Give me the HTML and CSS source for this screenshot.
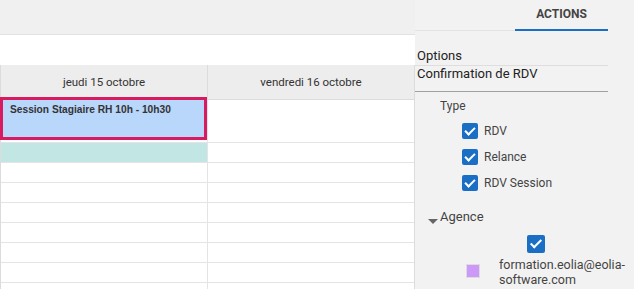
FILE: index.html
```html
<!DOCTYPE html>
<html>
<head>
    <title>Agenda</title>
    <link rel="stylesheet" href="styles.css">
</head>
<body>
    <div class="page">
        <div class="calendar">
            <div class="toolbar"></div>
            <div class="bar"></div>
            <div class="grid">
                <div class="row head">
                    <div class="cell">jeudi 15 octobre</div>
                    <div class="cell">vendredi 16 octobre</div>
                </div>
                <div class="row first">
                    <div class="cell"></div>
                    <div class="cell"></div>
                </div>
                <div class="row">
                    <div class="cell teal"></div>
                    <div class="cell"></div>
                </div>
                <div class="row"><div class="cell"></div><div class="cell"></div></div>
                <div class="row"><div class="cell"></div><div class="cell"></div></div>
                <div class="row"><div class="cell"></div><div class="cell"></div></div>
                <div class="row"><div class="cell"></div><div class="cell"></div></div>
                <div class="row"><div class="cell"></div><div class="cell"></div></div>
                <div class="row"><div class="cell"></div><div class="cell"></div></div>
                <div class="row"><div class="cell"></div><div class="cell"></div></div>

                <div class="event">Session Stagiaire RH 10h - 10h30</div>
            </div>
        </div>

        <div class="sidebar">
            <div class="tabs">
                <div class="tab active">ACTIONS</div>
            </div>
            <div class="menu-item">Options</div>
            <div class="menu-item last">Confirmation de RDV</div>

            <div class="group">
                <div class="group-title">Type</div>
                <label class="check"><span class="box"></span>RDV</label>
                <label class="check"><span class="box"></span>Relance</label>
                <label class="check"><span class="box"></span>RDV Session</label>
            </div>

            <div class="agence">
                <div class="agence-title"><span class="caret"></span>Agence</div>
                <div class="agence-check"><span class="box big"></span></div>
                <div class="agence-row">
                    <span class="swatch"></span>
                    <span class="agence-name">formation.eolia@eolia-<br>software.com</span>
                </div>
            </div>
        </div>
    </div>
</body>
</html>
```

FILE: styles.css
```css
body {
    margin: 0;
    font-family: Roboto, "Liberation Sans", sans-serif;
    background-color: #f2f2f2;
    color: #333;
}

.page {
    display: flex;
    width: 634px;
    height: 289px;
    overflow: hidden;
}

/* left part : planning */
.calendar {
    width: 415px;
    flex-shrink: 0;
}

.toolbar {
    height: 34px;
    background-color: #f0f0f0;
}

.bar {
    height: 30px;
    background-color: #fff;
    border-top: 1px solid #e2e2e2;
}

.grid {
    position: relative;
    background-color: #fff;
    border-left: 1px solid #dcdcdc;
    border-right: 1px solid #dcdcdc;
    height: 300px;
}

.row {
    display: flex;
    height: 19px;
    border-bottom: 1px solid #e4e4e4;
}

.row .cell {
    width: 206px;
    border-right: 1px solid #e4e4e4;
}

.row .cell:last-child {
    border-right: none;
}

.row.head {
    height: 34px;
    background-color: #ededed;
    border-bottom: 1px solid #dcdcdc;
}

.row.head .cell {
    font-size: 11.5px;
    line-height: 34px;
    text-align: center;
    color: #333;
    border-right-color: #dcdcdc;
}

.row.first {
    height: 42px;
}

.cell.teal {
    background-color: #c2e6e3;
}

.event {
    position: absolute;
    left: -1px;
    top: 32px;
    width: 194px;
    height: 33px;
    border: 3px solid #d81b60;
    background-color: #b9d6fb;
    font-family: "Liberation Sans", Arial, sans-serif;
    font-weight: bold;
    font-size: 10.2px;
    color: #333;
    padding-left: 7px;
    padding-top: 4px;
}

/* right part : actions */
.sidebar {
    flex: 1;
    background-color: #f2f2f2;
    font-size: 13px;
    color: #333;
}

.tabs {
    display: flex;
    justify-content: flex-end;
    width: 193px;
    border-bottom: 1px solid #e2e2e2;
    height: 30px;
}

.tab {
    width: 93px;
    text-align: center;
    font-weight: bold;
    font-size: 12px;
    color: #444;
    line-height: 29px;
}

.tab.active {
    border-bottom: 2px solid #1a6fc4;
    margin-bottom: -1px;
}

.menu-item {
    width: 191px;
    padding-left: 2px;
    padding-top: 17px;
    height: 17px;
    line-height: 16px;
    border-bottom: 1px solid #dedede;
    color: #222;
}

.menu-item.last {
    padding-top: 0;
    height: 25px;
    border-bottom: 1px solid #a0a0a0;
}

.group {
    padding-left: 25px;
    padding-top: 6px;
}

.group-title {
    font-size: 12px;
    line-height: 16px;
    color: #444;
    height: 20px;
}

.check {
    display: flex;
    align-items: center;
    gap: 6px;
    padding-left: 22px;
    height: 26px;
    font-size: 12px;
    color: #444;
}

.box {
    display: inline-block;
    width: 16px;
    height: 16px;
    border-radius: 2px;
    background-color: #1a6fc4;
    position: relative;
}

.box::after {
    content: "";
    position: absolute;
    left: 5px;
    top: 2px;
    width: 4px;
    height: 8px;
    border: solid #fff;
    border-width: 0 2px 2px 0;
    transform: rotate(45deg);
}

.box.big {
    width: 18px;
    height: 18px;
}

.box.big::after {
    left: 6px;
    top: 2px;
    width: 4px;
    height: 9px;
}

.agence {
    padding-top: 10px;
}

.agence-title {
    display: flex;
    align-items: center;
    padding-left: 13px;
    font-size: 13px;
    color: #444;
    height: 20px;
}

.caret {
    width: 0;
    height: 0;
    border-left: 5px solid transparent;
    border-right: 5px solid transparent;
    border-top: 5px solid #666;
    margin-top: 10px;
    margin-right: 2px;
}

.agence-check {
    padding-left: 112px;
    padding-top: 9px;
    height: 18px;
}

.agence-row {
    display: flex;
    align-items: center;
    padding-left: 51px;
    margin-top: 4px;
}

.swatch {
    width: 12px;
    height: 12px;
    background-color: #cc99f9;
    border: 1px solid #ddd;
    margin-right: 19px;
    margin-top: -2px;
}

.agence-name {
    font-size: 12.5px;
    line-height: 15px;
    color: #444;
}
```
